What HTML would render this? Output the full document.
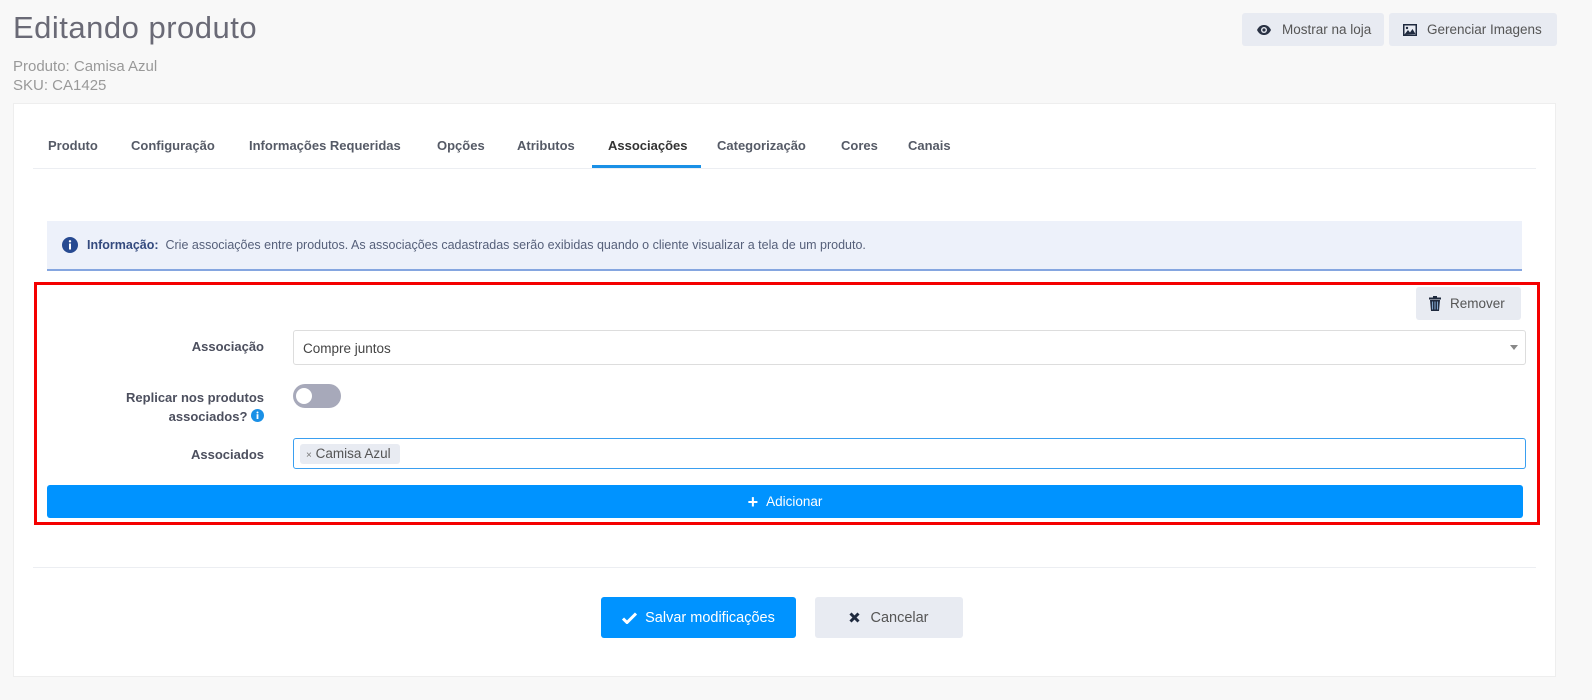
<!DOCTYPE html>
<html><head><meta charset="utf-8"><style>
*{box-sizing:border-box;margin:0;padding:0}
body{width:1592px;height:700px;background:#f8f8f8;font-family:"Liberation Sans",sans-serif;position:relative;overflow:hidden;color:#4a4a5a}
.abs{position:absolute}
h1{position:absolute;left:13px;top:10px;font-size:31px;font-weight:normal;color:#6a6a76;letter-spacing:.5px}
.sub{left:13px;font-size:15px;color:#999}
.tbtn{position:absolute;top:13px;height:33px;background:#e8ebf2;border-radius:3px;font-size:13.5px;color:#555;display:flex;align-items:center;padding-left:14px}
.card{left:13px;top:103px;width:1543px;height:574px;background:#fff;border:1px solid #eee}
.tab{position:absolute;top:138px;font-size:13px;font-weight:bold;color:#555a66}
.lbl{position:absolute;font-size:13px;font-weight:bold;color:#4c4f5e;text-align:right;right:1328px}
</style></head><body>
<h1>Editando produto</h1>
<div class="abs sub" style="top:58px">Produto: Camisa Azul</div>
<div class="abs sub" style="top:77px">SKU: CA1425</div>
<div class="tbtn" style="left:1242px;width:142px"><svg width="16" height="12" viewBox="0 0 16 12"><path d="M1 6C3 2 5.5 1 8 1s5 1 7 5c-2 4-4.5 5-7 5S3 10 1 6z" fill="#2a3244"/><circle cx="8" cy="6" r="3" fill="#e8ebf2"/><circle cx="8" cy="6" r="1.6" fill="#2a3244"/></svg><span style="margin-left:10px">Mostrar na loja</span></div>
<div class="tbtn" style="left:1389px;width:168px"><svg width="14" height="12" viewBox="0 0 14 12"><rect x="0" y="0" width="14" height="12" fill="#1f2a3e"/><rect x="1.5" y="1.5" width="11" height="9" fill="#e8ebf2"/><path d="M1.5 10.5L5 6l2 2.5 2.5-3.5 3 5z" fill="#1f2a3e"/><circle cx="4" cy="4" r="1.2" fill="#1f2a3e"/></svg><span style="margin-left:10px">Gerenciar Imagens</span></div>

<div class="abs card"></div>
<div class="tab" style="left:48px">Produto</div>
<div class="tab" style="left:131px">Configuração</div>
<div class="tab" style="left:249px">Informações Requeridas</div>
<div class="tab" style="left:437px">Opções</div>
<div class="tab" style="left:517px">Atributos</div>
<div class="tab" style="left:608px;color:#333">Associações</div>
<div class="tab" style="left:717px">Categorização</div>
<div class="tab" style="left:841px">Cores</div>
<div class="tab" style="left:908px">Canais</div>
<div class="abs" style="left:33px;top:168px;width:1503px;height:1px;background:#eceef2"></div>
<div class="abs" style="left:592px;top:165px;width:109px;height:3px;background:#1a90e6"></div>

<div class="abs" style="left:47px;top:221px;width:1475px;height:50px;background:#edf1fa;border-bottom:2px solid #85a6e0"></div>
<svg class="abs" style="left:62px;top:237px" width="16" height="16" viewBox="0 0 16 16"><circle cx="8" cy="8" r="8" fill="#274a91"/><rect x="7" y="6.5" width="2" height="6" fill="#fff"/><circle cx="8" cy="4.3" r="1.2" fill="#fff"/></svg>
<div class="abs" style="left:87px;top:238px;font-size:12.5px;color:#56607a"><b style="color:#344a7e">Informação:</b>&nbsp; Crie associações entre produtos. As associações cadastradas serão exibidas quando o cliente visualizar a tela de um produto.</div>

<div class="abs" style="left:34px;top:282px;width:1506px;height:243px;border:3px solid #f40000"></div>
<div class="abs" style="left:1416px;top:287px;width:105px;height:33px;background:#e8ebf2;border-radius:3px;font-size:13.5px;color:#555;display:flex;align-items:center;padding-left:13px"><svg width="12" height="15" viewBox="0 0 12 15"><rect x="0" y="1.5" width="12" height="2" fill="#1f2a3e"/><rect x="4" y="0" width="4" height="2" fill="#1f2a3e"/><path d="M1 4h10l-1 11H2z" fill="#1f2a3e"/><path d="M3.5 5.5v8M6 5.5v8M8.5 5.5v8" stroke="#7fa2c8" stroke-width="1.1"/></svg><span style="margin-left:9px">Remover</span></div>

<div class="lbl" style="top:339px;right:1328px">Associação</div>
<div class="abs" style="left:293px;top:330px;width:1233px;height:35px;border:1px solid #ddd;border-radius:3px;font-size:13.5px;color:#444;padding:10px 9px">Compre juntos</div>
<div class="abs" style="left:1510px;top:345px;width:0;height:0;border-left:4px solid transparent;border-right:4px solid transparent;border-top:5px solid #888"></div>

<div class="lbl" style="top:388px;line-height:19px">Replicar nos produtos<br>associados? <svg width="13" height="13" viewBox="0 0 13 13" style="vertical-align:-1px"><circle cx="6.5" cy="6.5" r="6.5" fill="#1a90e6"/><rect x="5.6" y="5.2" width="1.8" height="4.8" fill="#fff"/><circle cx="6.5" cy="3.5" r="1" fill="#fff"/></svg></div>
<div class="abs" style="left:293px;top:384px;width:48px;height:24px;background:#a7a9ba;border-radius:12px"></div>
<div class="abs" style="left:296px;top:388px;width:16px;height:16px;background:#fff;border-radius:50%"></div>

<div class="lbl" style="top:447px">Associados</div>
<div class="abs" style="left:293px;top:438px;width:1233px;height:31px;border:1.5px solid #3a9ff0;border-radius:3px"></div>
<div class="abs" style="left:300px;top:444px;width:100px;height:20px;background:#e8ebf2;border-radius:3px;font-size:13.5px;color:#555;padding:2px 6px"><span style="font-size:10px;color:#777">×</span> Camisa Azul</div>

<div class="abs" style="left:47px;top:485px;width:1476px;height:33px;background:#0093ff;border-radius:3px;color:#fff;font-size:13.5px;display:flex;align-items:center;justify-content:center"><b style="font-size:18px;margin-right:8px;line-height:1">+</b>Adicionar</div>

<div class="abs" style="left:33px;top:567px;width:1503px;height:1px;background:#eceef2"></div>
<div class="abs" style="left:601px;top:597px;width:195px;height:41px;background:#0093ff;border-radius:3px;color:#fff;font-size:14.5px;display:flex;align-items:center;justify-content:center"><svg width="15" height="12" viewBox="0 0 15 12" style="margin-right:8px"><path d="M1 6.5l4 4L14 1.5" stroke="#fff" stroke-width="3" fill="none"/></svg>Salvar modificações</div>
<div class="abs" style="left:815px;top:597px;width:148px;height:41px;background:#e8ebf2;border-radius:3px;color:#555;font-size:14.5px;display:flex;align-items:center;justify-content:center"><svg width="11" height="11" viewBox="0 0 11 11" style="margin-right:10px"><path d="M1.5 1.5l8 8M9.5 1.5l-8 8" stroke="#1f2a3e" stroke-width="3"/></svg>Cancelar</div>
</body></html>
